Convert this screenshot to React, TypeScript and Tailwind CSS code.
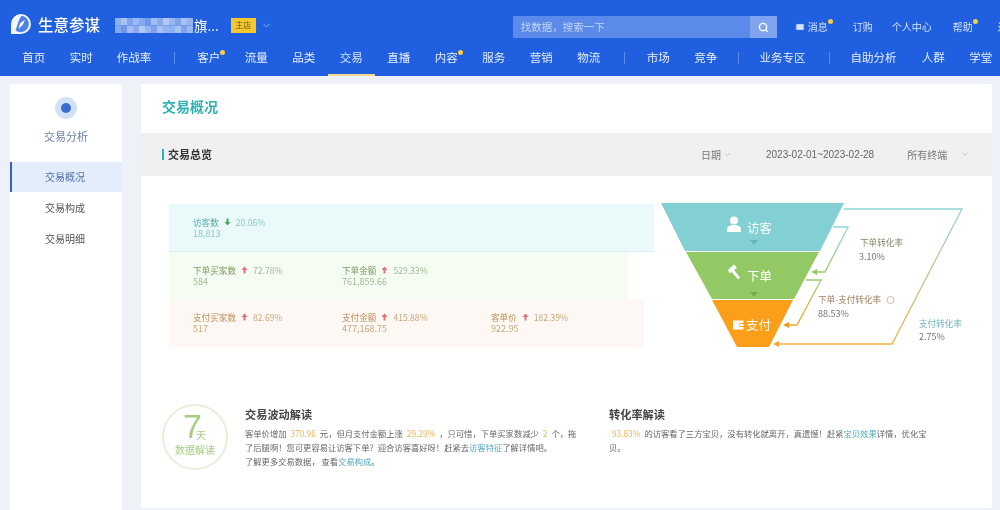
import React from "react";
import { ChevronDown, Mail, Search } from "lucide-react";

const Dot = ({ top }: { top: string }) => <span className={`absolute -right-[5px] h-[5px] w-[5px] rounded-full bg-[#f6cf3f] ${top}`} />;

function NavItem({ label, dot, active, wide }: { label: string; dot?: boolean; active?: boolean; wide?: boolean }) {
  return (
    <div className={`flex h-full shrink-0 justify-center pt-[1px] ${wide ? "w-[72px]" : label.length === 3 ? "w-[58px]" : "w-[47.5px]"} ${active ? "border-b-2 border-[#f3d98b] text-[#d9e4fb]" : "text-[#e6eefd]"}`}>
      <span className="relative h-[12px] text-[11.5px] leading-[12px]">
        {label}
        {dot && <Dot top="-top-[1px]" />}
      </span>
    </div>
  );
}

const Sep = ({ className }: { className: string }) => <div className={`mt-[2px] h-[12px] w-px shrink-0 bg-[#5c8bea] ${className}`} />;

const mosaic = ["#8fb0ef", "#a9c2f4", "#7fa3ec", "#9ab8f1", "#86a9ee", "#6f97e9", "#a2bdf3", "#8aaced", "#b1c8f5", "#98b6f0", "#7ea2ec", "#a6c0f3", "#95b3f0"];

function StoreMosaic() {
  return (
    <svg width="79" height="15" viewBox="0 0 79 15" className="shrink-0">
      {mosaic.map((fill, i) => (
        <g key={i}>
          <rect x={i * 6} y="0" width="6" height="7.5" fill={fill} />
          <rect x={i * 6} y="7.5" width="6" height="7.5" fill={mosaic[(i + 4) % mosaic.length]} />
        </g>
      ))}
    </svg>
  );
}

function Arrow({ up }: { up: boolean }) {
  return (
    <svg width="7" height="8" viewBox="0 0 7 8" className="mx-[5px] shrink-0">
      {up ? (
        <path d="M3.500 0.500L6.500 4H4.500V7.500H2.500V4H0.500z" fill="#e0707a" />
      ) : (
        <path d="M3.500 7.500L6.500 4H4.500V0.500H2.500V4H0.500z" fill="#4fa45a" />
      )}
    </svg>
  );
}

function Metric({ label, pct, value, up, labelCls, pctCls, valueCls }: { label: string; pct: string; value: string; up: boolean; labelCls: string; pctCls: string; valueCls: string }) {
  return (
    <div className="text-[8.6px] leading-[12px]">
      <div className="flex items-center whitespace-nowrap">
        <span className={labelCls}>{label}</span>
        <Arrow up={up} />
        <span className={pctCls}>{pct}</span>
      </div>
      <div className={`text-[9px] ${valueCls}`}>{value}</div>
    </div>
  );
}

function Funnel() {
  return (
    <svg width="320" height="156" viewBox="654 199 320 156" className="-mt-[5px] shrink-0">
      <defs>
        <linearGradient id="outer" x1="0" y1="209" x2="0" y2="344" gradientUnits="userSpaceOnUse">
          <stop offset="0" stopColor="#8fd5d6" />
          <stop offset="1" stopColor="#f7b23f" />
        </linearGradient>
        <linearGradient id="mid" x1="0" y1="227" x2="0" y2="272" gradientUnits="userSpaceOnUse">
          <stop offset="0" stopColor="#8fd5d6" />
          <stop offset="1" stopColor="#9bcc6c" />
        </linearGradient>
        <linearGradient id="low" x1="0" y1="280" x2="0" y2="325" gradientUnits="userSpaceOnUse">
          <stop offset="0" stopColor="#9bcc6c" />
          <stop offset="1" stopColor="#f7a52c" />
        </linearGradient>
      </defs>
      <polygon points="661,203 844,203 820,251 685,251" fill="#82d0d4" />
      <polygon points="686,252 819,252 794,299 712,299" fill="#93c964" />
      <polygon points="712,300 793,300 769,347 737,347" fill="#fb9e19" />
      <polygon points="750,240 758,240 754,244.5" fill="#5fb3ba" />
      <polygon points="750,292 758,292 754,296.5" fill="#74ab48" />

      <path d="M844 209H962L892 344H778" fill="none" stroke="url(#outer)" strokeWidth="1.3" />
      <polygon points="773,344 779,341 779,347" fill="#f7a52c" />
      <path d="M833 227H848L825 272H816" fill="none" stroke="url(#mid)" strokeWidth="1.3" />
      <polygon points="811,272 817,269 817,275" fill="#93c964" />
      <path d="M806 280H821L797 325H788" fill="none" stroke="url(#low)" strokeWidth="1.3" />
      <polygon points="783,325 789,322 789,328" fill="#f09a1c" />

      {/* user */}
      <circle cx="734" cy="220.5" r="4" fill="#fff" />
      <path d="M727 232v-2.5c0-3 2.5-4.5 7-4.5s7 1.5 7 4.5v2.5z" fill="#fff" />
      {/* gavel */}
      <path d="M728 270l6-5.500 3 3.200-3 2 6 8-2 1.600-6.500-7.300-2 1.500z" fill="#fff" />
      {/* wallet */}
      <path d="M733 320.500h10.500v2.500h-4v4h4v2.500H733z" fill="#fff" />
      <rect x="740" y="324" width="3.500" height="2" fill="#fff" />

      <text x="747" y="232.500" fontSize="12.500" fill="#fff">访客</text>
      <text x="747" y="281" fontSize="12.500" fill="#fff">下单</text>
      <text x="746" y="329.500" fontSize="12.500" fill="#fff">支付</text>

      <text x="860" y="246" fontSize="8.600" fill="#7c8f6c">下单转化率</text>
      <text x="859" y="260" fontSize="9" fill="#777">3.10%</text>
      <text x="818" y="303" fontSize="8.600" fill="#a1835f">下单-支付转化率</text>
      <circle cx="890.500" cy="300" r="3.500" fill="none" stroke="#b09070" strokeWidth="0.600" />
      <text x="818" y="317" fontSize="9" fill="#777">88.53%</text>
      <text x="919" y="327" fontSize="8.600" fill="#6fb5bb">支付转化率</text>
      <text x="919" y="340" fontSize="9" fill="#777">2.75%</text>
    </svg>
  );
}

export default function App() {
  return (
    <div className="flex h-[510px] w-[1000px] flex-col overflow-hidden bg-[#eef2f8] font-['Noto_Sans_CJK_SC','Liberation_Sans',sans-serif] blur-[0.3px]">
      <header className="h-[76px] shrink-0 bg-[#1f5fe0]">
        <div className="flex h-[50px] items-center overflow-hidden whitespace-nowrap pl-[10px] text-white">
          <svg width="21" height="22" viewBox="0 0 21 22" className="mb-[3px] shrink-0">
            <path d="M11 1a10 10 0 0 1 0 20H1V11A10 10 0 0 1 11 1z" fill="#f2f6fe" />
            <path d="M11.500 2.800a8.300 8.300 0 0 1 0 16.500c-2 0-4.500-.5-6-2 2-4 3-11 6-14.500z" fill="#4f80e6" />
            <path d="M15 6.500l-2 5-4.500 4.500 1.500-5.500z" fill="#fff" />
          </svg>
          <span className="ml-[7px] shrink-0 text-[15.5px] font-medium">生意参谋</span>
          <div className="ml-[15px] shrink-0"><StoreMosaic /></div>
          <span className="shrink-0 text-[13.5px]">旗...</span>
          <span className="ml-[12px] flex h-[15px] w-[25px] shrink-0 items-center justify-center bg-[#f5c92e] text-[8px] text-[#6b5a16]">主店</span>
          <ChevronDown size={11} className="ml-[5px] shrink-0 text-[#9ab8f1]" />
          <div className="ml-[241px] mt-[4px] flex h-[22px] w-[264px] shrink-0 items-center rounded-[1px] bg-[#5b8aea]">
            <span className="flex-1 pl-[8px] text-[10.500px] text-[#c3d5f8]">找数据，搜索一下</span>
            <span className="flex h-full w-[27px] items-center justify-center bg-[#7fa3ee]">
              <Search size={11} strokeWidth={3} className="text-white" />
            </span>
          </div>
          <div className="ml-[18px] mt-[3px] flex shrink-0 items-center text-[10px] text-[#d5e2fb]">
            <Mail size={10} fill="#d5e2fb" className="mr-[3px] text-[#1f5fe0]" />
            <span className="relative">消息<Dot top="top-0" /></span>
            <span className="ml-[25px]">订购</span>
            <span className="ml-[19px]">个人中心</span>
            <span className="relative ml-[21px]">帮助<Dot top="top-0" /></span>
            <span className="ml-[25px]">进</span>
          </div>
        </div>
        <nav className="flex h-[26px] items-start pl-[10px]">
          <NavItem label="首页" />
          <NavItem label="实时" />
          <NavItem label="作战率" />
          <Sep className="ml-[11px] mr-[10px]" />
          <NavItem label="客户" dot />
          <NavItem label="流量" />
          <NavItem label="品类" />
          <NavItem label="交易" active />
          <NavItem label="直播" />
          <NavItem label="内容" dot />
          <NavItem label="服务" />
          <NavItem label="营销" />
          <NavItem label="物流" />
          <Sep className="ml-[11px] mr-[10px]" />
          <NavItem label="市场" />
          <NavItem label="竞争" />
          <Sep className="ml-[8px] mr-[8px]" />
          <NavItem label="业务专区" wide />
          <Sep className="ml-[10px] mr-[8px]" />
          <NavItem label="自助分析" wide />
          <NavItem label="人群" />
          <NavItem label="学堂" />
        </nav>
      </header>

      <div className="flex min-h-0 flex-1 pl-[10px] pt-[8px]">
        <aside className="w-[112px] shrink-0 bg-white">
          <div className="flex h-[78px] flex-col items-center pt-[13px]">
            <div className="flex h-[22px] w-[22px] items-center justify-center rounded-full bg-[#d3e1f7]">
              <div className="h-[10px] w-[10px] rounded-full bg-[#3a6cd0]" />
            </div>
            <div className="mt-[9px] text-[11px] leading-[16px] text-[#6f82a8]">交易分析</div>
          </div>
          <div className="flex h-[30px] items-center border-l-2 border-[#2a66c6] bg-[#e3edfb] pb-[2px] pl-[33px] text-[10px] text-[#4f6fa8]">交易概况</div>
          <div className="flex h-[32px] items-center pb-[2px] pl-[35px] text-[10px] text-[#555]">交易构成</div>
          <div className="flex h-[30px] items-center pb-[2px] pl-[35px] text-[10px] text-[#555]">交易明细</div>
        </aside>

        <main className="ml-[19px] flex h-[424px] w-[851px] shrink-0 flex-col bg-white">
          <div className="flex h-[49px] shrink-0 items-center pb-[5px] pl-[21px] text-[14px] font-bold text-[#2eb3b5]">交易概况</div>
          <div className="flex h-[43px] shrink-0 items-center bg-[#f0f0f0] pb-[1px] pl-[21px] text-[10px] text-[#777]">
            <span className="h-[11px] w-[2px] bg-[#2eb3b5]" />
            <span className="ml-[4px] text-[11px] font-bold text-[#333]">交易总览</span>
            <span className="ml-[489px]">日期</span>
            <ChevronDown size={9} className="ml-[2px] text-[#bbb]" />
            <span className="ml-[34px] font-['Liberation_Sans',sans-serif] text-[#666]">2023-02-01~2023-02-28</span>
            <span className="ml-[33px]">所有终端</span>
            <ChevronDown size={10} className="ml-[13px] text-[#bbb]" />
          </div>

          <div className="flex pl-[28px] pt-[28px]">
            <div className="w-[485px] shrink-0">
              <div className="grid h-[48px] w-[485px] grid-cols-[149px_149px_149px] border-b border-[#d9eeee] bg-[#eafafb] pl-[24px] pt-[12px]">
                <Metric label="访客数" pct="20.06%" value="18,813" up={false} labelCls="text-[#5aa9ae]" pctCls="text-[#8cc6c9]" valueCls="text-[#8cc6c9]" />
              </div>
              <div className="grid h-[47px] w-[459px] grid-cols-[149px_149px_149px] bg-[#f5fdf2] pl-[24px] pt-[12px]">
                <Metric label="下单买家数" pct="72.78%" value="584" up labelCls="text-[#7d9b63]" pctCls="text-[#a3b894]" valueCls="text-[#a3b894]" />
                <Metric label="下单金额" pct="529.33%" value="761,859.66" up labelCls="text-[#7d9b63]" pctCls="text-[#a3b894]" valueCls="text-[#a3b894]" />
              </div>
              <div className="grid h-[48px] w-[475px] grid-cols-[149px_149px_149px] bg-[#fdf8f3] pl-[24px] pt-[12px]">
                <Metric label="支付买家数" pct="82.69%" value="517" up labelCls="text-[#c0905a]" pctCls="text-[#c9a67e]" valueCls="text-[#c9a67e]" />
                <Metric label="支付金额" pct="415.88%" value="477,168.75" up labelCls="text-[#c0905a]" pctCls="text-[#c9a67e]" valueCls="text-[#c9a67e]" />
                <Metric label="客单价" pct="182.39%" value="922.95" up labelCls="text-[#c0905a]" pctCls="text-[#c9a67e]" valueCls="text-[#c9a67e]" />
              </div>
            </div>
            <Funnel />
          </div>

          <div className="mt-[49px] flex pl-[21px] whitespace-nowrap">
            <div className="flex h-[66px] w-[66px] shrink-0 flex-col rounded-full border-2 border-[#e6efdc] pt-[3px] text-[#a5cf7f]">
              <div className="flex h-[33px] items-end pl-[19px]">
                <span className="font-['Liberation_Sans',sans-serif] text-[34px] font-light leading-[32px] tracking-[-6px]">7</span>
                <span className="text-[10px] leading-[14px]">天</span>
              </div>
              <div className="mt-[2px] text-center text-[10px] leading-[12px]">数据解读</div>
            </div>
            <div className="ml-[17px] w-[364px] shrink-0 pt-[2px]">
              <div className="text-[11.200px] font-bold leading-[16px] text-[#444]">交易波动解读</div>
              <div className="mt-[4px] text-[8.300px] leading-[14px] text-[#666]">
                <div>
                  客单价增加<span className="mx-[4px] text-[#f0b45a]">370.96</span>元，但月支付金额上涨<span className="mx-[4px] text-[#f0b45a]">29.29%</span>，只可惜，下单买家数减少<span className="mx-[4px] text-[#f0b45a]">2</span>个，拖
                </div>
                <div>了后腿啊！您可更容易让访客下单？迎合访客喜好呀！赶紧去<span className="text-[#54a8c4]">访客特征</span>了解详情吧。</div>
                <div>了解更多交易数据， 查看<span className="text-[#54a8c4]">交易构成</span>。</div>
              </div>
            </div>
            <div className="shrink-0 pt-[2px]">
              <div className="text-[11.200px] font-bold leading-[16px] text-[#444]">转化率解读</div>
              <div className="mt-[4px] text-[8.300px] leading-[14px] text-[#666]">
                <div>
                  <span className="ml-[3px] mr-[4px] text-[#f0b45a]">93.83%</span>的访客看了三方宝贝，没有转化就离开，真遗憾！赶紧<span className="text-[#54a8c4]">宝贝效果</span>详情，优化宝
                </div>
                <div>贝。</div>
              </div>
            </div>
          </div>
        </main>
      </div>
    </div>
  );
}
